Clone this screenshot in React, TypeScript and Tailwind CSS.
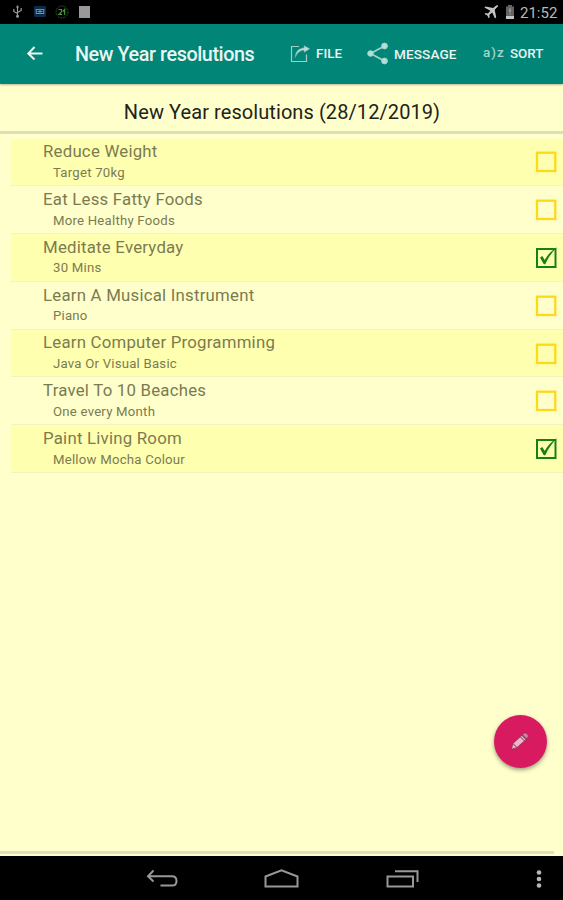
type Resolution = {
  title: string
  detail: string
  done?: boolean
}

const resolutions: Resolution[] = [
  { title: 'Reduce Weight', detail: 'Target 70kg' },
  { title: 'Eat Less Fatty Foods', detail: 'More Healthy Foods' },
  { title: 'Meditate Everyday', detail: '30 Mins', done: true },
  { title: 'Learn A Musical Instrument', detail: 'Piano' },
  { title: 'Learn Computer Programming', detail: 'Java Or Visual Basic' },
  { title: 'Travel To 10 Beaches', detail: 'One every Month' },
  { title: 'Paint Living Room', detail: 'Mellow Mocha Colour', done: true },
]

function StatusBar() {
  return (
    <div className="flex h-[23.5px] shrink-0 items-center bg-black pr-[5px] pl-[12px] text-[#b8b8b8]">
      {/* USB */}
      <svg className="h-[13px] w-[11px]" viewBox="0 0 11 13" fill="none" stroke="#999" strokeWidth="1.2">
        <path d="M5.5 1v10M5.5 8.5L1.8 6.5V4M5.5 7.5l3.7-2V3" />
        <path d="M5.5 0L4 2.5h3z" fill="#999" stroke="none" />
        <circle cx="5.5" cy="11.3" r="1.5" fill="#999" stroke="none" />
      </svg>
      <svg className="ml-[11px] h-[11px] w-[12px]" viewBox="0 0 12 11">
        <rect width="12" height="11" rx="1" fill="#0c2b48" />
        <rect x="2.2" y="3.5" width="7.6" height="4" fill="none" stroke="#6493b5" />
        <path d="M6 3.5v4M3.5 5.5h5" stroke="#6493b5" />
      </svg>
      <svg className="ml-[9px] h-[14px] w-[14px]" viewBox="0 0 14 14" fill="none">
        <circle cx="7" cy="7" r="6" stroke="#285823" strokeDasharray="2 1" />
        <path d="M3.5 4.5h3v2.3L4 9.3h3M8 6.5l1.7-2V10" stroke="#4c9636" strokeWidth="1.2" />
      </svg>
      <div className="ml-[10px] h-[12px] w-[11px] bg-[#999]" />
      <svg className="ml-auto h-[14px] w-[15px]" viewBox="0 0 15 14" fill="#c4c4c4">
        <path d="M13.9.5c-1-.6-2 .2-2.9 1.1L9.2 3.1 1.5 1.5.4 2.6l6 3.1-2.5 2.7-2.5-.3-.8.8 2.7 1.5 1.4 2.8.9-.8-.2-2.6 2.8-2.3 2.8 5.9 1.2-1.1-1.5-7.5 1.6-1.8c.9-.9 2.4-1.7 1.6-2.5z" />
      </svg>
      <svg className="ml-[6px] h-[14px] w-[10px]" viewBox="0 0 10 14">
        <path d="M3 0h4v1.5h2V14H1V1.5h2z" fill="#646464" />
        <path d="M1 11h8v3H1z" fill="#c6c6c6" />
        <path d="M5 3.5v3.8M5 8.5v1" stroke="#b3b3b3" strokeWidth="1.2" />
      </svg>
      <span className="ml-[5px] w-[38px] whitespace-nowrap pt-[3px] text-[15px] leading-none">21:52</span>
    </div>
  )
}

function Toolbar() {
  return (
    <header className="relative z-10 flex h-[60px] shrink-0 items-center bg-[#008577] text-[#e9f5f2] shadow-[0_1px_2px_rgba(0,0,0,0.28)]">
      <svg className="ml-[27px] h-[15px] w-[16px]" viewBox="0 0 16 15" fill="none" stroke="currentColor" strokeWidth="2">
        <path d="M7.5 1L1.3 7.5l6.2 6M1.5 7.5H15.5" />
      </svg>
      <h1 className="ml-[32px] w-[215px] whitespace-nowrap pt-[2px] text-[19.8px] font-medium tracking-[-0.42px]">
        New Year resolutions
      </h1>
      <svg className="h-[19px] w-[21px]" viewBox="0 0 21 19" fill="none" stroke="#9dcfc8" strokeWidth="1.2">
        <path d="M9 2.5H1.5v15h15v-7" />
        <path d="M5 14C5 8 8.5 4.3 14 3.8V1.5L20 4.8l-6 3.7V6.3C10 6.4 7.2 9 5 14z" fill="#b9ded8" stroke="#57978f" strokeWidth=".6" />
      </svg>
      <span className="ml-[5px] w-[51px] whitespace-nowrap text-[13.4px] leading-[20px] pt-px font-medium">FILE</span>
      <svg className="h-[23px] w-[22px]" viewBox="0 0 22 23" fill="#b4ded8" stroke="#a5d2cc">
        <path d="M3.5 11.5l14-7.5M3.5 11.5L17.5 19" fill="none" strokeWidth="1.6" />
        <circle cx="3.5" cy="11.5" r="2.8" />
        <circle cx="17.5" cy="4" r="2.9" />
        <circle cx="17.5" cy="19" r="2.9" />
      </svg>
      <span className="ml-[5px] w-[89px] whitespace-nowrap text-[13.6px] leading-[20px] pt-px font-medium tracking-[0.1px]">MESSAGE</span>
      <span className="w-[27px] whitespace-nowrap pb-[2px] text-[13.5px] font-medium text-[#a5d5ce]">
        a<span className="px-px">)</span>z
      </span>
      <span className="whitespace-nowrap text-[13.4px] leading-[20px] pt-px font-medium">SORT</span>
    </header>
  )
}

function Checkbox({ checked }: { checked?: boolean }) {
  return (
    <svg className="h-[23px] w-[23px]" viewBox="0 0 23 23" fill="none">
      {checked ? (
        <>
          <rect x="2" y="3" width="18.5" height="18" stroke="#168016" strokeWidth="2" />
          <path d="M5 11.6l2.3-1.6 2.4 4C12.5 8.8 16.5 4.5 22.3 1c-5 5-9 10.3-12 17.2H8.8z" fill="#168016" />
        </>
      ) : (
        <rect x="2" y="2.7" width="18.3" height="18.3" stroke="#fed81c" strokeWidth="2.3" />
      )}
    </svg>
  )
}

function ResolutionRow({ title, detail, done }: Resolution) {
  return (
    <li className="flex h-[47.8px] items-center border-b border-[#f3f3c2] pr-[5px] pl-[32px] text-[#7b7b50] odd:bg-[#ffffb0]">
      <div className="flex-1 self-start pt-[2.8px]">
        <div className="text-[16.8px] leading-[21px] tracking-[0.23px]">{title}</div>
        <div className="pt-[1.5px] pl-[10px] text-[13.2px] leading-[18px] tracking-[0.22px]">{detail}</div>
      </div>
      <Checkbox checked={done} />
    </li>
  )
}

function NavigationBar() {
  return (
    <nav className="relative flex h-[44px] shrink-0 items-center bg-black pt-[2px] text-[#989898]">
      <svg className="ml-[146px] h-[20px] w-[33px]" viewBox="0 0 33 20" fill="none" stroke="currentColor" strokeWidth="2">
        <path d="M7.5 1.5L2 7.2l5.5 5.2M2 7.2h24q4.5 0 4.5 4.7t-4.5 4.7H14.5" />
      </svg>
      <svg className="ml-[85px] h-[20px] w-[35px]" viewBox="0 0 35 20" fill="none" stroke="currentColor" strokeWidth="2">
        <path d="M1.5 17.5V7.5L17.5 1.2 33.5 7.5v10z" />
      </svg>
      <svg className="ml-[87px] h-[20px] w-[33px]" viewBox="0 0 33 20" fill="none" stroke="currentColor" strokeWidth="2">
        <path d="M1.5 7.5h25.5v10H1.5zM9 2.2h22.5V13" />
      </svg>
      <svg className="ml-[117px] h-[20px] w-[6px]" viewBox="0 0 6 20" fill="#b8b8b8">
        <circle cx="3" cy="3.5" r="2.3" />
        <circle cx="3" cy="10" r="2.3" />
        <circle cx="3" cy="16.5" r="2.3" />
      </svg>
    </nav>
  )
}

export default function App() {
  return (
    <div className="flex h-[900px] w-[563px] flex-col overflow-hidden bg-[#ffffcc] font-['Roboto',sans-serif]">
      <StatusBar />
      <Toolbar />
      <main className="relative flex flex-1 flex-col">
        <h2 className="flex h-[50.5px] items-center justify-center border-b-[3px] border-[#dedeb5] pt-[9px] pl-px text-[20px] tracking-[0.08px] text-[#22221b]">
          New Year resolutions (28/12/2019)
        </h2>
        <ul className="mt-[4.5px] ml-[11px]">
          {resolutions.map((item) => (
            <ResolutionRow key={item.title} {...item} />
          ))}
        </ul>
        <button
          type="button"
          aria-label="Edit"
          className="absolute right-[16px] bottom-[88px] flex size-[53px] items-center justify-center rounded-full bg-[#d81b60] pr-px pb-px shadow-[0_2px_4px_rgba(0,0,0,0.4)]"
        >
          <svg className="h-[20px] w-[20px]" viewBox="0 0 20 20" stroke="#713047" strokeWidth=".6">
            <path d="M1.5 18.2L3 12.5 12 4.3l4 4.2-9 8z" fill="#f3b3cd" />
            <path d="M12 4.3l2.3-2.2c1.5-1 4.8 1.8 3.8 3.9L16 8.5z" fill="#d3819f" />
            <path d="M3 12.5l4 4M10.3 5.8l4 4M12.5 4l4 4" fill="none" strokeWidth="1" />
          </svg>
        </button>
        <div className="mt-auto mr-[9px] h-[5px] border-t-[3px] border-[#e2e2b8]" />
      </main>
      <NavigationBar />
    </div>
  )
}
